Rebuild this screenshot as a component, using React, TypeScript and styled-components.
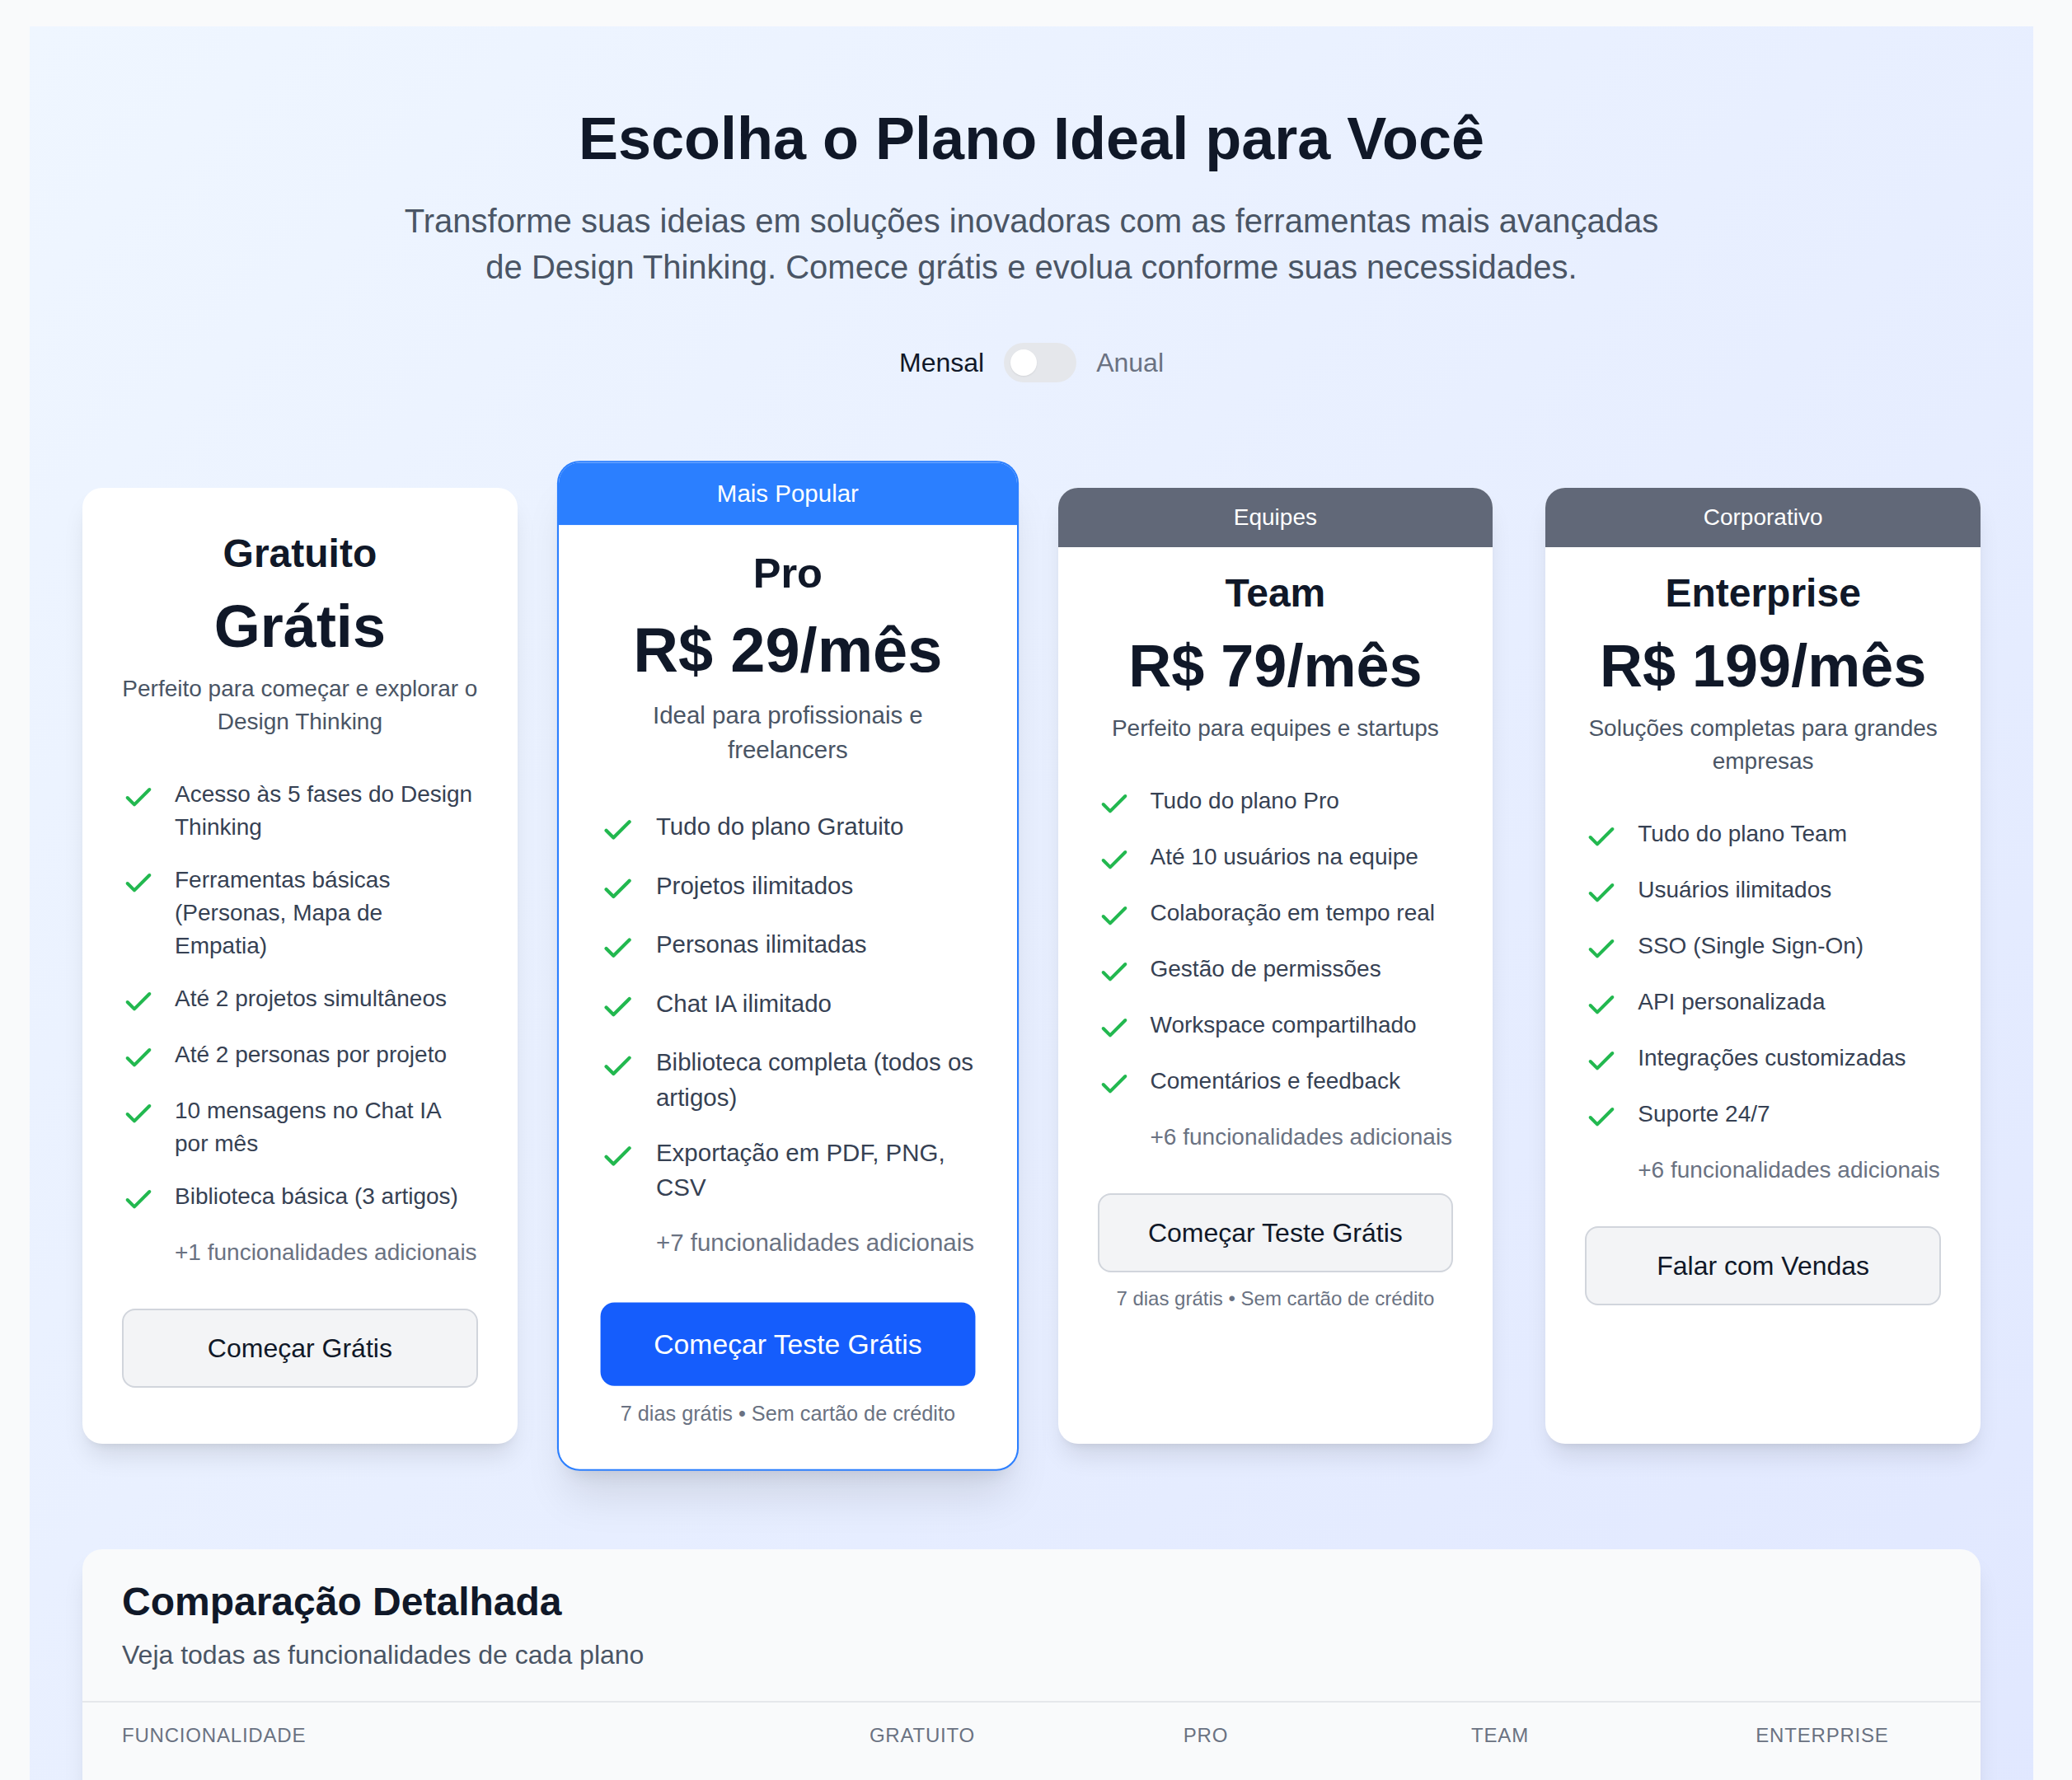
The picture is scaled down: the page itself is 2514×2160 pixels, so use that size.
import React from 'react';
import styled, { createGlobalStyle } from 'styled-components';
import { Check } from 'lucide-react';

const GlobalStyle = createGlobalStyle`
    * {
        box-sizing: border-box;
    }
    body {
        margin: 0;
        background: #f9fafb;
        font-family: "Liberation Sans", Arial, Helvetica, sans-serif;
        color: #101828;
    }
`;

const Page = styled.div`
    padding: 32px 47px 0 36px;
`;

const Shell = styled.main`
    background: linear-gradient(135deg, #eff6ff 0%, #e0e7ff 100%);
    padding: 96px 64px 96px;
`;

const Hero = styled.header`
    text-align: center;
`;

const Title = styled.h1`
    margin: 0 0 32px;
    font-size: 72px;
    line-height: 80px;
    font-weight: 700;
    color: #101828;
`;

const Subtitle = styled.p`
    max-width: 1536px;
    margin: 0 auto 64px;
    font-size: 40px;
    line-height: 56px;
    color: #4a5565;
`;

const ToggleRow = styled.div`
    display: flex;
    align-items: center;
    justify-content: center;
    gap: 24px;
    margin-bottom: 128px;
`;

const ToggleLabel = styled.span<{ $active?: boolean }>`
    font-size: 32px;
    line-height: 48px;
    font-weight: 500;
    color: ${p => (p.$active ? '#101828' : '#6a7282')};
`;

const Track = styled.button`
    position: relative;
    width: 88px;
    height: 48px;
    padding: 0;
    border: none;
    border-radius: 999px;
    background: #e5e7eb;
    cursor: pointer;
`;

const Thumb = styled.span`
    position: absolute;
    top: 8px;
    left: 8px;
    width: 32px;
    height: 32px;
    border-radius: 50%;
    background: #ffffff;
    box-shadow: 0 1px 2px rgba(0, 0, 0, 0.08);
`;

const PlanGrid = styled.div`
    display: grid;
    grid-template-columns: repeat(4, 1fr);
    gap: 64px;
    align-items: stretch;
`;

const Card = styled.article<{ $featured?: boolean }>`
    display: flex;
    flex-direction: column;
    background: #ffffff;
    border-radius: 24px;
    overflow: hidden;
    box-shadow: ${p =>
        p.$featured
            ? '0 0 0 2px #2b7fff, 0 40px 50px -10px rgba(0, 0, 0, 0.1), 0 16px 20px -12px rgba(0, 0, 0, 0.1)'
            : '0 20px 30px -6px rgba(0, 0, 0, 0.1), 0 8px 12px -8px rgba(0, 0, 0, 0.1)'};
    transform: ${p => (p.$featured ? 'scale(1.053)' : 'none')};
    position: relative;
    z-index: ${p => (p.$featured ? 1 : 0)};
`;

const Badge = styled.div<{ $tone: 'blue' | 'gray' }>`
    padding: 16px;
    text-align: center;
    font-size: 28px;
    line-height: 40px;
    font-weight: 500;
    color: #ffffff;
    background: ${p => (p.$tone === 'blue' ? '#2b7fff' : '#616878')};
`;

const CardBody = styled.div<{ $badge?: boolean }>`
    display: flex;
    flex-direction: column;
    padding: ${p => (p.$badge ? '24px' : '48px')} 48px 48px;
`;

const PlanName = styled.h3`
    margin: 0 0 16px;
    text-align: center;
    font-size: 48px;
    line-height: 64px;
    font-weight: 700;
    color: #101828;
`;

const Price = styled.div`
    margin: 0 0 16px;
    text-align: center;
    font-size: 72px;
    line-height: 80px;
    font-weight: 700;
    color: #101828;
`;

const PlanDesc = styled.p`
    margin: 0 0 48px;
    text-align: center;
    font-size: 28px;
    line-height: 40px;
    color: #4a5565;
`;

const FeatureList = styled.ul`
    list-style: none;
    margin: 0 0 48px;
    padding: 0;
    display: flex;
    flex-direction: column;
    gap: 24px;
`;

const FeatureItem = styled.li`
    display: flex;
    align-items: flex-start;
`;

const CheckMark = styled(Check)`
    flex-shrink: 0;
    margin: 4px 24px 0 0;
    color: #22b84f;
`;

const FeatureText = styled.span`
    font-size: 28px;
    line-height: 40px;
    color: #364153;
`;

const MoreItem = styled.li`
    padding-left: 64px;
    font-size: 28px;
    line-height: 40px;
    color: #6a7282;
`;

const ActionButton = styled.button<{ $primary?: boolean }>`
    width: 100%;
    padding: 22px 24px;
    border-radius: 16px;
    border: 2px solid ${p => (p.$primary ? '#155dfc' : '#d1d5dc')};
    background: ${p => (p.$primary ? '#155dfc' : '#f3f4f6')};
    color: ${p => (p.$primary ? '#ffffff' : '#101828')};
    font-family: inherit;
    font-size: 32px;
    line-height: 48px;
    font-weight: 500;
    cursor: pointer;
`;

const Note = styled.p`
    margin: 16px 0 0;
    text-align: center;
    font-size: 24px;
    line-height: 32px;
    color: #6a7282;
`;

const Comparison = styled.section`
    margin-top: 128px;
    padding-bottom: 120px;
    background: #f9fafb;
    border-radius: 24px;
    overflow: hidden;
    box-shadow: 0 20px 30px -6px rgba(0, 0, 0, 0.1), 0 8px 12px -8px rgba(0, 0, 0, 0.1);
`;

const ComparisonHead = styled.div`
    padding: 32px 48px;
    border-bottom: 2px solid #e5e7eb;
`;

const ComparisonTitle = styled.h2`
    margin: 0 0 8px;
    font-size: 48px;
    line-height: 64px;
    font-weight: 700;
    color: #101828;
`;

const ComparisonSub = styled.p`
    margin: 0;
    font-size: 32px;
    line-height: 48px;
    color: #4a5565;
`;

const Table = styled.table`
    width: 100%;
    border-collapse: collapse;
    table-layout: fixed;
`;

const Th = styled.th<{ $first?: boolean }>`
    padding: 24px 48px;
    text-align: ${p => (p.$first ? 'left' : 'center')};
    font-size: 24px;
    line-height: 32px;
    font-weight: 500;
    letter-spacing: 0.8px;
    text-transform: uppercase;
    color: #6a7282;
`;

type Plan = {
    badge?: { label: string; tone: 'blue' | 'gray' };
    name: string;
    price: string;
    description: string;
    features: React.ReactNode[];
    more: number;
    cta: string;
    primary?: boolean;
    note?: string;
    featured?: boolean;
};

const plans: Plan[] = [
    {
        name: 'Gratuito',
        price: 'Grátis',
        description: 'Perfeito para começar e explorar o Design Thinking',
        features: [
            'Acesso às 5 fases do Design Thinking',
            'Ferramentas básicas (Personas, Mapa de Empatia)',
            'Até 2 projetos simultâneos',
            'Até 2 personas por projeto',
            <>
                10 mensagens no Chat IA
                <br />
                por mês
            </>,
            'Biblioteca básica (3 artigos)',
        ],
        more: 1,
        cta: 'Começar Grátis',
    },
    {
        badge: { label: 'Mais Popular', tone: 'blue' },
        name: 'Pro',
        price: 'R$ 29/mês',
        description: 'Ideal para profissionais e freelancers',
        features: [
            'Tudo do plano Gratuito',
            'Projetos ilimitados',
            'Personas ilimitadas',
            'Chat IA ilimitado',
            'Biblioteca completa (todos os artigos)',
            'Exportação em PDF, PNG, CSV',
        ],
        more: 7,
        cta: 'Começar Teste Grátis',
        primary: true,
        note: '7 dias grátis • Sem cartão de crédito',
        featured: true,
    },
    {
        badge: { label: 'Equipes', tone: 'gray' },
        name: 'Team',
        price: 'R$ 79/mês',
        description: 'Perfeito para equipes e startups',
        features: [
            'Tudo do plano Pro',
            'Até 10 usuários na equipe',
            'Colaboração em tempo real',
            'Gestão de permissões',
            'Workspace compartilhado',
            'Comentários e feedback',
        ],
        more: 6,
        cta: 'Começar Teste Grátis',
        note: '7 dias grátis • Sem cartão de crédito',
    },
    {
        badge: { label: 'Corporativo', tone: 'gray' },
        name: 'Enterprise',
        price: 'R$ 199/mês',
        description: 'Soluções completas para grandes empresas',
        features: [
            'Tudo do plano Team',
            'Usuários ilimitados',
            'SSO (Single Sign-On)',
            'API personalizada',
            'Integrações customizadas',
            'Suporte 24/7',
        ],
        more: 6,
        cta: 'Falar com Vendas',
    },
];

const columns = ['Funcionalidade', 'Gratuito', 'Pro', 'Team', 'Enterprise'];

const PlanCard = ({ plan }: { plan: Plan }) => (
    <Card $featured={plan.featured}>
        {plan.badge && <Badge $tone={plan.badge.tone}>{plan.badge.label}</Badge>}
        <CardBody $badge={!!plan.badge}>
            <PlanName>{plan.name}</PlanName>
            <Price>{plan.price}</Price>
            <PlanDesc>{plan.description}</PlanDesc>
            <FeatureList>
                {plan.features.map((f, i) => (
                    <FeatureItem key={i}>
                        <CheckMark size={40} strokeWidth={2.4} />
                        <FeatureText>{f}</FeatureText>
                    </FeatureItem>
                ))}
                <MoreItem>+{plan.more} funcionalidades adicionais</MoreItem>
            </FeatureList>
            <ActionButton $primary={plan.primary}>{plan.cta}</ActionButton>
            {plan.note && <Note>{plan.note}</Note>}
        </CardBody>
    </Card>
);

const App = () => (
    <>
        <GlobalStyle />
        <Page>
            <Shell>
                <Hero>
                    <Title>Escolha o Plano Ideal para Você</Title>
                    <Subtitle>
                        Transforme suas ideias em soluções inovadoras com as ferramentas mais
                        avançadas de Design Thinking. Comece grátis e evolua conforme suas
                        necessidades.
                    </Subtitle>
                    <ToggleRow>
                        <ToggleLabel $active>Mensal</ToggleLabel>
                        <Track aria-label="Alternar cobrança anual">
                            <Thumb />
                        </Track>
                        <ToggleLabel>Anual</ToggleLabel>
                    </ToggleRow>
                </Hero>

                <PlanGrid>
                    {plans.map(p => (
                        <PlanCard key={p.name} plan={p} />
                    ))}
                </PlanGrid>

                <Comparison>
                    <ComparisonHead>
                        <ComparisonTitle>Comparação Detalhada</ComparisonTitle>
                        <ComparisonSub>Veja todas as funcionalidades de cada plano</ComparisonSub>
                    </ComparisonHead>
                    <Table>
                        <colgroup>
                            <col style={{ width: 833 }} />
                            <col style={{ width: 372 }} />
                            <col style={{ width: 316 }} />
                            <col style={{ width: 398 }} />
                            <col />
                        </colgroup>
                        <thead>
                            <tr>
                                {columns.map((c, i) => (
                                    <Th key={c} $first={i === 0}>
                                        {c}
                                    </Th>
                                ))}
                            </tr>
                        </thead>
                    </Table>
                </Comparison>
            </Shell>
        </Page>
    </>
);

export default App;
